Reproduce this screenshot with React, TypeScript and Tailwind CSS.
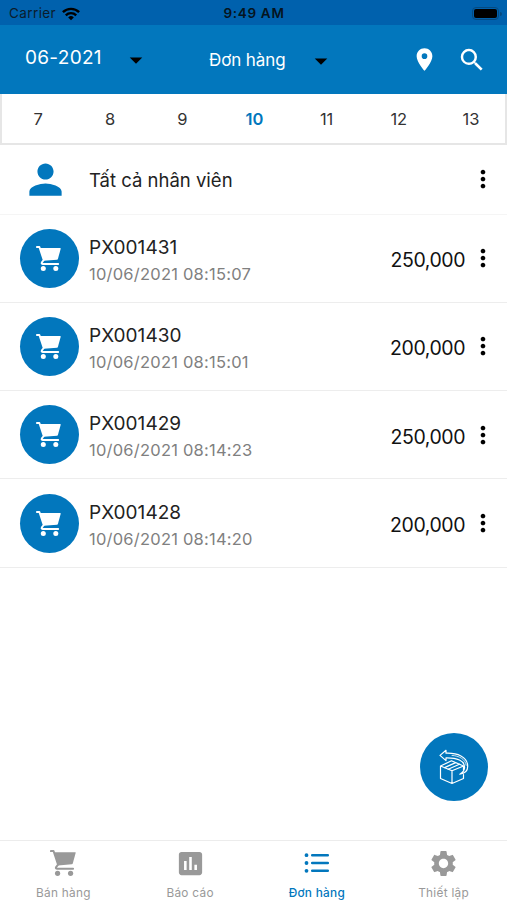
import { IoMdPerson } from 'react-icons/io';
import { MdArrowDropDown, MdAssessment, MdLocationOn, MdMoreVert, MdSearch, MdSettings } from 'react-icons/md';

interface Order {
  code: string;
  date: string;
  total: string;
}

const days = [7, 8, 9, 10, 11, 12, 13];
const selectedDay = 10;

const orders: Order[] = [
  { code: 'PX001431', date: '10/06/2021 08:15:07', total: '250,000' },
  { code: 'PX001430', date: '10/06/2021 08:15:01', total: '200,000' },
  { code: 'PX001429', date: '10/06/2021 08:14:23', total: '250,000' },
  { code: 'PX001428', date: '10/06/2021 08:14:20', total: '200,000' },
];

const CartIcon = ({ className }: { className?: string }) => (
  <svg viewBox="0 0 25 25" className={className} fill="currentColor">
    <path
      d="M.8 1H3.4L7.7 14 5.9 16.4Q5.1 18 6.9 18H22.2"
      fill="none"
      stroke="currentColor"
      strokeWidth="1.9"
      strokeLinecap="round"
      strokeLinejoin="round"
    />
    <path d="M3.6 2.1H24.3Q24.8 2.1 24.7 2.7L21.9 13Q21.7 13.7 21 13.8L7.7 14.8z" />
    <circle cx="7.3" cy="22.4" r="2.5" />
    <circle cx="19.8" cy="22.4" r="2.5" />
  </svg>
);

const ListIcon = ({ className }: { className?: string }) => (
  <svg viewBox="0 0 28 28" className={className} fill="none" stroke="currentColor" strokeLinecap="round">
    <path d="M9.2 6.2h15.6M9.2 14h15.6M9.2 21.8h15.6" strokeWidth="2.5" />
    <path d="M3.5 6.2h.01M3.5 14h.01M3.5 21.8h.01" strokeWidth="3.8" />
  </svg>
);

const WifiIcon = () => (
  <svg viewBox="0 0 18 14" className="h-[14px] w-[18px]" fill="none" stroke="#000" strokeWidth="2.4">
    <path d="M.9 5.2a11.6 11.6 0 0 1 16.2 0M3.8 8.3a7.4 7.4 0 0 1 10.4 0" />
    <path d="M9 13.2 6.2 10.4a4 4 0 0 1 5.6 0z" fill="#000" stroke="none" />
  </svg>
);

// Box with a return arrow going over it
const ReturnBoxIcon = () => (
  <svg
    viewBox="0 0 30 36"
    className="h-[36px] w-[30px]"
    fill="none"
    stroke="#fff"
    strokeWidth="1.2"
    strokeLinejoin="round"
    strokeLinecap="round"
  >
    <path d="M1.5 17 13 21.8 24.5 17M13 21.8V34.5L1.5 29.5V17L12.5 11.8 24.5 17M24.5 25.5V29.5L13 34.5M24.5 17V21" />
    <path d="M5.6 18.6 16.6 13.6M9.2 20.2 20.4 15.2" />
    <path d="M1 6.4 7 1.3V4.2C18 3.8 28.7 7.5 28.7 17.3 28.7 22 26 24.6 20.8 25.2 24 23.4 25.6 21 25.6 18.2 25.6 11.7 18 8.6 7 8.8V11.6z" />
    <path d="M13 6.4C20 6.8 26.4 10 27.2 16.3" strokeWidth=".8" />
  </svg>
);

const tabs = [
  { label: 'Bán hàng', icon: CartIcon, size: 'size-[26px]' },
  { label: 'Báo cáo', icon: MdAssessment, size: 'size-[31px]' },
  { label: 'Đơn hàng', icon: ListIcon, size: 'size-[28px]', active: true },
  { label: 'Thiết lập', icon: MdSettings, size: 'size-[31px]' },
];

const StatusBar = () => (
  <div className="grid h-[25px] grid-cols-3 items-center bg-[#0061ad] pr-[5px] pl-[9px] pt-[2px] text-[13.5px] text-[#0b1c2c]">
    <div className="flex items-center gap-[6px]">
      <span className="tracking-[0.4px]">Carrier</span>
      <WifiIcon />
    </div>
    <span className="-ml-[3px] text-center text-[13.5px] font-semibold tracking-[0.7px] whitespace-nowrap text-[#051420]">9:49 AM</span>
    <div className="flex items-center justify-end gap-px">
      <div className="h-[13px] w-[27px] rounded-[4px] border border-[#064a80] p-[1px]">
        <div className="h-full rounded-[2px] bg-black" />
      </div>
      <div className="h-[4px] w-[2px] rounded-r bg-[#064a80]" />
    </div>
  </div>
);

const OrderRow = ({ order }: { order: Order }) => (
  <div className="flex h-[88.3px] items-center border-b border-[#ededed] pr-[10px] pl-[20px]">
    <div className="flex size-[59px] shrink-0 items-center justify-center rounded-full bg-[#0277bd]">
      <CartIcon className="mr-[2px] size-[25px] text-white" />
    </div>
    <div className="ml-[10px] flex-1 pt-[5px]">
      <div className="text-[19px] leading-[26px] tracking-[0.05px] text-[#222]">{order.code}</div>
      <div className="text-[16.5px] leading-[26px] tracking-[0.22px] text-[#808080]">{order.date}</div>
    </div>
    <span className="mt-[5px] text-[19.5px] tracking-[-0.45px] text-[#111]">{order.total}</span>
    <MdMoreVert className="ml-[4px] size-[28px] text-black" />
  </div>
);

export default function App() {
  return (
    <div className="flex h-[900px] w-[507px] flex-col overflow-hidden bg-white font-['Inter','Noto_Sans',sans-serif]">
      <StatusBar />

      {/* Header */}
      <header className="flex h-[69px] items-center bg-[#0277bd] text-white">
        <span className="mb-[3px] ml-[25px] w-[96px] text-[19px] tracking-[0.3px]">06-2021</span>
        <MdArrowDropDown className="size-[30px] text-black" />
        <span className="mt-[2px] ml-[58px] w-[97px] text-[17px] tracking-[-0.1px]">Đơn hàng</span>
        <MdArrowDropDown className="mt-[2px] size-[30px] text-black" />
        <MdLocationOn className="ml-[75px] size-[27px]" />
        <MdSearch className="ml-[19px] size-[30px]" />
      </header>

      {/* Day picker */}
      <div className="h-[51px] shrink-0 border-x-2 border-b-2 border-[#e6e6e6]">
        <div className="-mr-[2px] grid h-[51px] grid-cols-7 items-center text-center text-[16.5px] text-[#333]">
          {days.map((day) => (
            <span key={day} className={day === selectedDay ? 'font-semibold text-[#0277bd]' : ''}>
              {day}
            </span>
          ))}
        </div>
      </div>

      <main className="relative flex-1">
        <div className="flex h-[69.5px] items-center border-b border-[#f5f5f5] pr-[10px] pl-[24px]">
          <IoMdPerson className="size-[43px] text-[#0277bd]" />
          <span className="mt-[3px] ml-[22px] flex-1 text-[18.5px] text-[#222]">Tất cả nhân viên</span>
          <MdMoreVert className="size-[28px] text-black" />
        </div>
        {orders.map((order) => (
          <OrderRow key={order.code} order={order} />
        ))}

        <button className="absolute right-[19px] bottom-[39px] flex size-[68px] items-center justify-center rounded-full bg-[#0277bd]">
          <ReturnBoxIcon />
        </button>
      </main>

      {/* Bottom tabs */}
      <nav className="grid h-[60px] shrink-0 grid-cols-4 border-t border-[#ececec]">
        {tabs.map(({ label, icon: Icon, size, active }) => (
          <div key={label} className={`flex flex-col items-center ${active ? 'text-[#0277bd]' : 'text-[#999]'}`}>
            <div className="flex h-[44px] items-center">
              <Icon className={size} />
            </div>
            <span className={`text-[11.8px] leading-[16px] tracking-[0.3px] ${active ? 'font-medium' : ''}`}>{label}</span>
          </div>
        ))}
      </nav>
    </div>
  );
}
